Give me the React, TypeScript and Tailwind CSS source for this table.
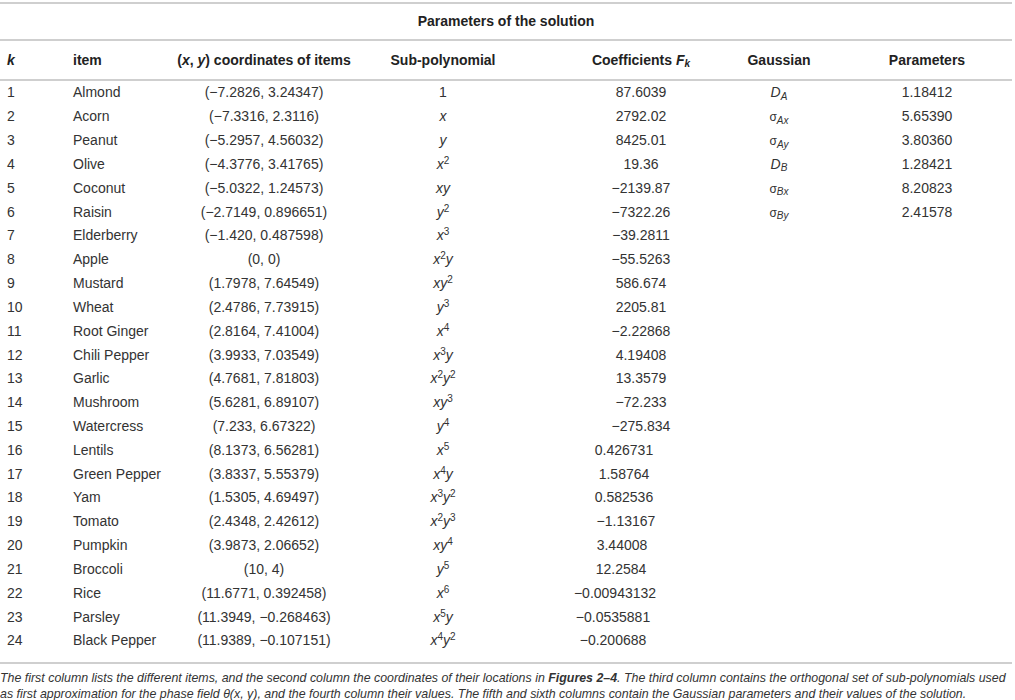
import type { ReactNode } from "react";

type Row = {
  k: number;
  item: string;
  coord: string;
  poly: ReactNode;
  coef: string;
  shift?: string;
  gauss?: ReactNode;
  param?: string;
};

const X = () => <i>x</i>;
const Y = () => <i>y</i>;
const sup = (n: number) => <sup className="text-[10px] not-italic">{n}</sup>;

const ROWS: Row[] = [
  { k: 1, item: "Almond", coord: "(−7.2826, 3.24347)", poly: "1", coef: "87.6039", gauss: <i>D<sub className="text-[10px]">A</sub></i>, param: "1.18412" },
  { k: 2, item: "Acorn", coord: "(−7.3316, 2.3116)", poly: <X />, coef: "2792.02", gauss: <span className="text-[12px]">σ<sub className="text-[10px] italic">Ax</sub></span>, param: "5.65390" },
  { k: 3, item: "Peanut", coord: "(−5.2957, 4.56032)", poly: <Y />, coef: "8425.01", gauss: <span className="text-[12px]">σ<sub className="text-[10px] italic">Ay</sub></span>, param: "3.80360" },
  { k: 4, item: "Olive", coord: "(−4.3776, 3.41765)", poly: <><X />{sup(2)}</>, coef: "19.36", gauss: <i>D<sub className="text-[10px]">B</sub></i>, param: "1.28421" },
  { k: 5, item: "Coconut", coord: "(−5.0322, 1.24573)", poly: <><X /><Y /></>, coef: "−2139.87", gauss: <span className="text-[12px]">σ<sub className="text-[10px] italic">Bx</sub></span>, param: "8.20823" },
  { k: 6, item: "Raisin", coord: "(−2.7149, 0.896651)", poly: <><Y />{sup(2)}</>, coef: "−7322.26", gauss: <span className="text-[12px]">σ<sub className="text-[10px] italic">By</sub></span>, param: "2.41578" },
  { k: 7, item: "Elderberry", coord: "(−1.420, 0.487598)", poly: <><X />{sup(3)}</>, coef: "−39.2811" },
  { k: 8, item: "Apple", coord: "(0, 0)", poly: <><X />{sup(2)}<Y /></>, coef: "−55.5263" },
  { k: 9, item: "Mustard", coord: "(1.7978, 7.64549)", poly: <><X /><Y />{sup(2)}</>, coef: "586.674" },
  { k: 10, item: "Wheat", coord: "(2.4786, 7.73915)", poly: <><Y />{sup(3)}</>, coef: "2205.81" },
  { k: 11, item: "Root Ginger", coord: "(2.8164, 7.41004)", poly: <><X />{sup(4)}</>, coef: "−2.22868" },
  { k: 12, item: "Chili Pepper", coord: "(3.9933, 7.03549)", poly: <><X />{sup(3)}<Y /></>, coef: "4.19408" },
  { k: 13, item: "Garlic", coord: "(4.7681, 7.81803)", poly: <><X />{sup(2)}<Y />{sup(2)}</>, coef: "13.3579" },
  { k: 14, item: "Mushroom", coord: "(5.6281, 6.89107)", poly: <><X /><Y />{sup(3)}</>, coef: "−72.233" },
  { k: 15, item: "Watercress", coord: "(7.233, 6.67322)", poly: <><Y />{sup(4)}</>, coef: "−275.834" },
  { k: 16, item: "Lentils", coord: "(8.1373, 6.56281)", poly: <><X />{sup(5)}</>, coef: "0.426731", shift: "pr-[34px]" },
  { k: 17, item: "Green Pepper", coord: "(3.8337, 5.55379)", poly: <><X />{sup(4)}<Y /></>, coef: "1.58764", shift: "pr-[34px]" },
  { k: 18, item: "Yam", coord: "(1.5305, 4.69497)", poly: <><X />{sup(3)}<Y />{sup(2)}</>, coef: "0.582536", shift: "pr-[34px]" },
  { k: 19, item: "Tomato", coord: "(2.4348, 2.42612)", poly: <><X />{sup(2)}<Y />{sup(3)}</>, coef: "−1.13167", shift: "pr-[30px]" },
  { k: 20, item: "Pumpkin", coord: "(3.9873, 2.06652)", poly: <><X /><Y />{sup(4)}</>, coef: "3.44008", shift: "pr-[38px]" },
  { k: 21, item: "Broccoli", coord: "(10, 4)", poly: <><Y />{sup(5)}</>, coef: "12.2584", shift: "pr-[40px]" },
  { k: 22, item: "Rice", coord: "(11.6771, 0.392458)", poly: <><X />{sup(6)}</>, coef: "−0.00943132", shift: "pr-[52px]" },
  { k: 23, item: "Parsley", coord: "(11.3949, −0.268463)", poly: <><X />{sup(5)}<Y /></>, coef: "−0.0535881", shift: "pr-[56px]" },
  { k: 24, item: "Black Pepper", coord: "(11.9389, −0.107151)", poly: <><X />{sup(4)}<Y />{sup(2)}</>, coef: "−0.200688", shift: "pr-[56px]" },
];

const GRID = "grid grid-cols-[66px_139px_118px_240px_156px_120px_176px]";

function Center({ children, className = "" }: { children: ReactNode; className?: string }) {
  return (
    <div className={`flex justify-center whitespace-nowrap ${className}`}>
      <span>{children}</span>
    </div>
  );
}

export default function App() {
  return (
    <div className="h-[700px] w-[1015px] overflow-hidden bg-white text-[#333] font-['Liberation_Sans',Arial,sans-serif]">
      <div className="mt-[2px] w-[1012px] border-t-2 border-[#cfcfcf]" />
      <div className="flex h-[37px] w-[1012px] items-center justify-center border-b-2 border-[#cfcfcf] text-[14px] font-bold text-[#222]">
        Parameters of the solution
      </div>
      <div className={`${GRID} h-[40px] w-[1012px] items-center border-b-2 border-[#cfcfcf] text-[14px] font-bold text-[#222]`}>
        <div className="pl-[7px] italic">k</div>
        <div className="pl-[7px]">item</div>
        <Center>
          (<i>x</i>,&nbsp;<i>y</i>) coordinates of items
        </Center>
        <Center>Sub-polynomial</Center>
        <Center>
          Coefficients <i>F<sub className="text-[10px]">k</sub></i>
        </Center>
        <Center>Gaussian</Center>
        <Center>Parameters</Center>
      </div>
      <div className="w-[1012px] border-b-2 border-[#cfcfcf] pb-[9px] text-[14px]">
        {ROWS.map((r) => (
          <div key={r.k} className={`${GRID} h-[23.83px] items-center`}>
            <div className="pl-[7px]">{r.k}</div>
            <div className="whitespace-nowrap pl-[7px]">{r.item}</div>
            <Center>{r.coord}</Center>
            <Center>{r.poly}</Center>
            <Center className={r.shift ?? ""}>{r.coef}</Center>
            <Center>{r.gauss}</Center>
            <Center>{r.param}</Center>
          </div>
        ))}
      </div>
      <div className="whitespace-nowrap pt-[6px] text-[12.4px] italic leading-[16px] text-[#333]">
        The first column lists the different items, and the second column the coordinates of their locations in <b>Figures 2–4</b>. The third column contains the orthogonal set of sub-polynomials used
        <br />
        as first approximation for the phase field θ(x, y), and the fourth column their values. The fifth and sixth columns contain the Gaussian parameters and their values of the solution.
      </div>
    </div>
  );
}
